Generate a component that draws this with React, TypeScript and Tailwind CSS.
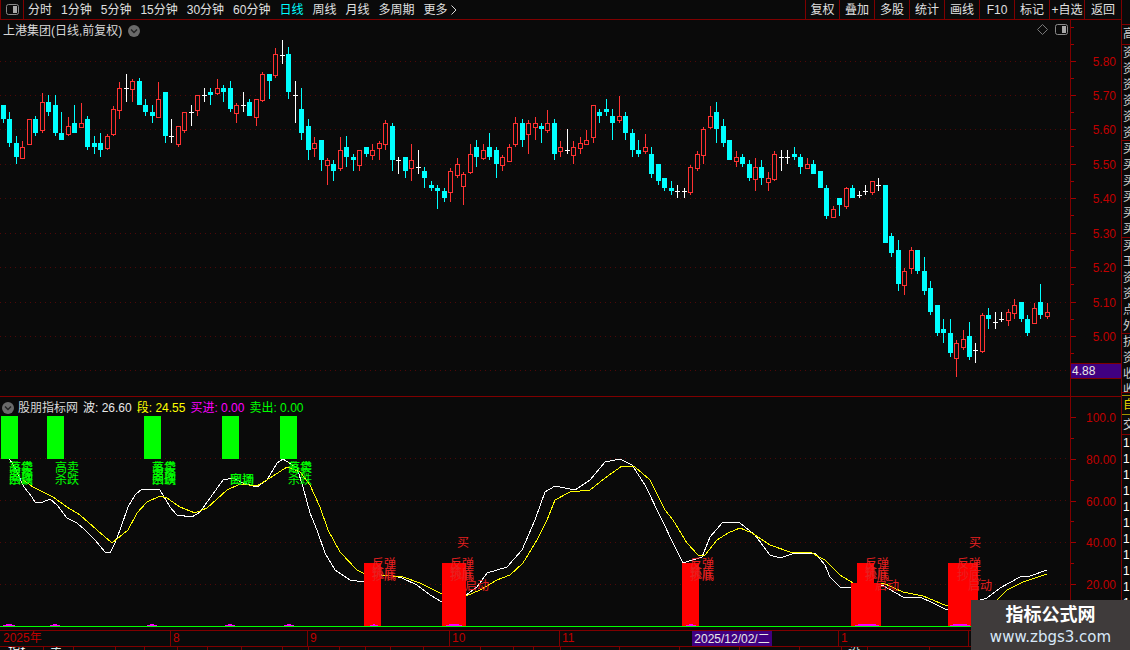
type Candle = [string, number, number, number, number, number];
type Group = { ox: number; oy: number; items: Candle[] };

// candle coords are read off 3x crops, so each group has its own origin
const candleGroups: Group[] = [
  {
    ox: 0,
    oy: 40,
    items: [
      ["c", 10, 195, 249, 195, 237], ["c", 28, 216, 321, 237, 309], ["c", 49, 288, 372, 309, 351], ["r", 67, 303, 354, 321, 354],
      ["r", 88, 237, 312, 237, 312], ["c", 106, 228, 288, 237, 279], ["r", 127, 159, 279, 186, 270], ["c", 145, 165, 228, 186, 216],
      ["c", 166, 165, 288, 195, 279], ["c", 184, 216, 300, 279, 300], ["r", 205, 231, 288, 258, 282], ["c", 223, 195, 279, 249, 279],
      ["r", 244, 189, 261, 249, 261], ["c", 262, 228, 330, 237, 321], ["c", 283, 288, 342, 309, 321], ["c", 301, 279, 351, 309, 330],
      ["r", 322, 282, 330, 288, 324], ["r", 340, 198, 288, 207, 282], ["r", 358, 126, 237, 144, 210], ["w", 379, 102, 186, 145, 145],
      ["r", 397, 117, 186, 123, 147], ["c", 418, 114, 195, 123, 195], ["c", 436, 177, 228, 195, 216], ["c", 457, 195, 249, 216, 228],
      ["r", 475, 126, 231, 177, 231], ["c", 496, 156, 309, 156, 288], ["w", 514, 237, 309, 289, 289], ["r", 535, 258, 321, 258, 312],
      ["r", 553, 216, 279, 216, 270], ["w", 574, 195, 258, 217, 217], ["r", 592, 165, 228, 165, 210], ["w", 613, 144, 186, 166, 166],
      ["c", 631, 144, 195, 156, 165], ["r", 652, 117, 165, 144, 159], ["c", 670, 135, 186, 144, 156], ["c", 691, 123, 216, 144, 207],
      ["r", 709, 189, 249, 195, 219], ["w", 730, 156, 216, 196, 196], ["c", 748, 177, 228, 186, 228], ["r", 769, 177, 258, 177, 231],
      ["r", 787, 96, 186, 102, 180], ["c", 808, 102, 177, 102, 123], ["r", 826, 24, 114, 42, 105], ["w", 847, 0, 72, 44, 44],
      ["c", 865, 21, 177, 42, 156], ["w", 886, 123, 249, 166, 166], ["c", 904, 144, 300, 207, 279], ["c", 925, 237, 360, 258, 330],
      ["r", 943, 291, 351, 309, 324], ["c", 964, 300, 393, 300, 360], ["r", 982, 354, 435, 360, 375], ["c", 1000, 360, 423, 372, 393],
      ["r", 1021, 291, 393, 330, 384], ["c", 1039, 288, 381, 321, 351],
    ],
  },
  {
    ox: 350,
    oy: 80,
    items: [
      ["c", 10, 222, 273, 231, 240], ["r", 28, 210, 273, 210, 255], ["c", 49, 201, 231, 201, 222], ["r", 67, 192, 240, 210, 225],
      ["r", 88, 183, 240, 189, 204], ["r", 106, 120, 210, 129, 192], ["c", 127, 129, 273, 138, 240], ["w", 145, 231, 282, 241, 241],
      ["c", 166, 231, 294, 231, 273], ["r", 184, 192, 303, 240, 264], ["w", 205, 210, 282, 262, 262], ["c", 223, 261, 324, 273, 294],
      ["c", 244, 303, 333, 315, 324], ["c", 262, 315, 387, 324, 333], ["c", 283, 324, 366, 333, 354], ["r", 301, 264, 366, 273, 336],
      ["r", 322, 234, 294, 252, 285], ["r", 340, 276, 375, 282, 318], ["r", 361, 192, 282, 222, 276], ["c", 379, 180, 261, 201, 231],
      ["r", 400, 192, 240, 210, 234], ["c", 418, 159, 240, 201, 231], ["c", 439, 201, 294, 210, 252], ["r", 457, 225, 273, 231, 255],
      ["r", 478, 192, 243, 201, 243], ["r", 496, 111, 201, 129, 192], ["c", 517, 117, 201, 129, 180], ["r", 535, 120, 222, 129, 162],
      ["r", 556, 111, 180, 129, 141], ["c", 574, 129, 189, 138, 147], ["r", 592, 90, 159, 129, 150], ["c", 613, 117, 240, 129, 222],
      ["r", 631, 183, 231, 201, 213], ["w", 652, 147, 222, 211, 211], ["r", 670, 183, 252, 201, 225], ["r", 691, 171, 222, 189, 204],
      ["r", 709, 150, 192, 180, 192], ["r", 730, 75, 189, 75, 171], ["c", 748, 87, 129, 96, 108], ["c", 769, 57, 108, 87, 96],
      ["c", 787, 87, 180, 108, 129], ["r", 808, 48, 129, 108, 120], ["c", 826, 96, 180, 108, 159], ["c", 847, 147, 231, 159, 210],
      ["c", 865, 180, 231, 210, 222], ["r", 886, 162, 222, 201, 213], ["c", 904, 201, 294, 222, 282], ["c", 925, 252, 315, 252, 303],
      ["c", 943, 294, 333, 294, 324], ["c", 964, 303, 345, 324, 333], ["w", 982, 315, 354, 334, 334],
    ],
  },
  {
    ox: 680,
    oy: 90,
    items: [
      ["w", 12, 294, 324, 304, 304], ["r", 31, 225, 315, 231, 305], ["r", 52, 183, 243, 192, 234], ["r", 70, 111, 222, 117, 195],
      ["r", 91, 48, 117, 78, 111], ["c", 109, 36, 159, 66, 117], ["c", 130, 87, 171, 108, 159], ["c", 148, 150, 210, 150, 210],
      ["r", 169, 183, 231, 201, 213], ["c", 187, 192, 231, 201, 222], ["c", 208, 210, 273, 222, 264], ["r", 226, 204, 303, 231, 267],
      ["c", 244, 210, 285, 231, 264], ["r", 265, 246, 303, 264, 276], ["r", 283, 183, 273, 192, 267], ["w", 304, 180, 243, 202, 202],
      ["w", 322, 180, 222, 202, 202], ["c", 343, 171, 210, 192, 201], ["c", 361, 192, 252, 201, 231], ["r", 382, 204, 234, 222, 234],
      ["c", 400, 210, 252, 222, 252], ["c", 421, 243, 294, 243, 294], ["c", 439, 285, 387, 294, 378], ["r", 460, 348, 381, 357, 381],
      ["c", 478, 324, 378, 324, 345], ["r", 499, 291, 357, 294, 348], ["c", 517, 285, 324, 294, 324], ["w", 538, 303, 324, 316, 316],
      ["w", 556, 285, 315, 304, 304], ["r", 577, 273, 315, 273, 306], ["w", 595, 264, 303, 286, 286], ["c", 616, 285, 459, 285, 459],
      ["c", 634, 429, 501, 438, 489], ["c", 655, 450, 603, 480, 582], ["r", 673, 534, 615, 543, 585], ["r", 694, 471, 552, 480, 534],
      ["c", 712, 480, 552, 480, 543], ["c", 733, 501, 615, 543, 603], ["c", 751, 573, 675, 594, 666], ["c", 772, 645, 738, 645, 729],
      ["c", 790, 687, 759, 717, 729], ["c", 811, 687, 801, 729, 789], ["r", 829, 750, 861, 759, 804], ["r", 850, 720, 780, 747, 771],
      ["c", 868, 696, 810, 738, 801], ["w", 886, 759, 819, 781, 781], ["r", 907, 669, 789, 675, 783], ["c", 925, 654, 717, 675, 687],
      ["w", 946, 666, 717, 697, 697], ["w", 964, 666, 696, 688, 688], ["r", 985, 657, 708, 666, 690], ["r", 1003, 627, 687, 645, 669],
      ["c", 1024, 636, 696, 636, 687], ["c", 1042, 675, 738, 687, 729], ["r", 1063, 639, 699, 654, 699], ["c", 1081, 582, 687, 636, 675],
      ["r", 1102, 639, 687, 666, 678],
    ],
  },
];

const whiteLine =
  "9,458 17,472 24,487 32,497 35,502 43,502 50,499 57,505 67,518 77,523 85,530 95,540 105,552 110,553 115,543 120,530 128,507 135,495 142,489 155,489 160,490 170,507 177,515 192,517 200,512 223,480 233,478 243,483 257,487 267,480 277,463 283,459 297,468 303,487 310,513 317,530 325,553 335,570 350,580 363,582 382,575 390,575 402,578 417,585 430,595 442,602 466,595 477,587 487,573 507,567 522,550 535,520 545,492 555,486 575,490 590,480 605,462 620,459 632,465 645,485 662,520 673,543 683,563 702,557 710,537 723,522 733,522 740,523 755,535 770,555 780,558 795,553 815,553 825,565 830,577 840,587 850,588 882,585 903,597 920,597 933,603 947,610 987,598 1000,588 1020,577 1030,576 1047,570";
const yellowLine =
  "23,480 33,487 53,497 67,507 80,515 97,530 112,543 128,530 137,513 147,502 160,496 167,498 180,507 195,513 207,508 227,490 240,484 257,486 270,478 287,467 300,472 310,485 320,507 328,530 340,552 357,570 363,573 382,575 403,577 420,583 440,593 466,596 480,590 497,580 510,575 523,563 537,540 547,520 555,500 570,492 590,490 605,478 622,466 635,467 650,480 665,510 673,520 687,543 698,555 705,555 717,540 728,533 740,528 752,533 770,545 790,552 810,552 825,560 830,565 840,575 853,583 883,583 903,592 923,596 947,606 997,600 1007,590 1023,582 1047,574";

const priceGrid = [61, 95, 129, 164, 198, 233, 267, 302, 336, 370];
const priceLabels: [string, number][] = [
  ["5.80", 61], ["5.70", 95], ["5.60", 129], ["5.50", 164], ["5.40", 198], ["5.30", 233], ["5.20", 267], ["5.10", 302], ["5.00", 336],
];
const indicatorLabels: [string, number][] = [
  ["100.0", 417], ["80.00", 459], ["60.00", 501], ["40.00", 542], ["20.00", 584],
];

const leftMenu = ["分时", "1分钟", "5分钟", "15分钟", "30分钟", "60分钟", "日线", "周线", "月线", "多周期"];
const rightMenu = ["复权", "叠加", "多股", "统计", "画线", "F10", "标记", "+自选", "返回"];

const greenBars = [1, 47, 144, 222, 280];
const redBars: [number, number, number][] = [
  [364, 17, 563], [442, 24, 563], [682, 17, 563], [851, 30, 583], [857, 17, 563], [948, 30, 563],
];
const mounds: [number, number][] = [[3, 12], [50, 10], [147, 10], [225, 10], [284, 10], [370, 8], [446, 16], [686, 10], [855, 24], [950, 20]];

const greenText: [string, number, number][] = [
  ["高卖", 9, 472], ["落袋", 9, 472], ["杀跌", 9, 484], ["回调", 9, 484], ["离场", 9, 480],
  ["高卖", 55, 472], ["杀跌", 55, 484],
  ["高卖", 152, 472], ["落袋", 152, 472], ["杀跌", 152, 484], ["回调", 152, 484], ["离场", 152, 480],
  ["回调", 230, 484], ["离场", 230, 484],
  ["高卖", 288, 472], ["落袋", 288, 472], ["杀跌", 288, 484],
];
const redText: [string, number, number][] = [
  ["反弹", 372, 568], ["抄底", 372, 580], ["筑底", 372, 578],
  ["买", 457, 547], ["反弹", 450, 568], ["抄底", 450, 580], ["筑底", 450, 578], ["启动", 465, 590],
  ["反弹", 690, 568], ["抄底", 690, 580], ["筑底", 690, 578],
  ["反弹", 865, 568], ["抄底", 865, 580], ["筑底", 865, 578], ["启动", 875, 590],
  ["买", 969, 547], ["反弹", 957, 568], ["抄底", 957, 580], ["启动", 968, 590],
];

const timeCells: [string, string][] = [
  ["2025年", "w-[170px]"], ["8", "w-[137px]"], ["9", "w-[142px]"], ["10", "w-[110px]"], ["11", "w-[133px]"],
];
const bottomTicks = [43, 73, 115, 144, 177, 207, 241, 282, 308, 339, 365, 390, 423, 480, 513, 533, 560, 620, 680, 740, 800, 842, 868, 930];
const stripSections = [
  { h: "h-[96px]", rows: ["资", "资", "资", "资", "资", "资"] },
  { h: "h-[97px]", rows: ["买", "买", "买", "买", "买", "买"] },
  { h: "h-[96px]", rows: ["买", "玉", "资", "资", "点", "外"] },
  { h: "h-[59px]", rows: ["抗", "资", "收", "收"] },
];

function ToggleIcon() {
  return (
    <svg width="13" height="11" viewBox="0 0 13 11">
      <rect x="0.5" y="0.5" width="12" height="10" rx="2" fill="none" stroke="#8a8a8a" />
      <rect x="7" y="2" width="4" height="7" fill="#a8a8a8" />
    </svg>
  );
}

function RoundChevron() {
  return (
    <svg width="12" height="12" viewBox="0 0 12 12">
      <circle cx="6" cy="6" r="6" fill="#6a6a6a" />
      <path d="M3 4.5 L6 7.5 L9 4.5" fill="none" stroke="#222" strokeWidth="1.4" />
    </svg>
  );
}

function Candles() {
  return (
    <>
      {candleGroups.flatMap((g, gi) =>
        g.items.map(([type, x, wt, wb, bt, bb], i) => {
          const cx = Math.floor(g.ox + x / 3);
          const y = (v: number) => Math.round(g.oy + v / 3);
          const color = type === "c" ? "#00ffff" : type === "r" ? "#ff3232" : "#ffffff";
          return (
            <g key={`${gi}-${i}`}>
              <rect x={cx} y={y(wt)} width="1" height={y(wb) - y(wt)} fill={color} />
              {type === "c" && <rect x={cx - 2} y={y(bt)} width="5" height={y(bb) - y(bt)} fill={color} />}
              {type === "r" && (
                <rect x={cx - 1.5} y={y(bt) + 0.5} width="4" height={y(bb) - y(bt)} fill="#0a0a0a" stroke={color} />
              )}
              {type === "w" && <rect x={cx - 2} y={y(bt)} width="5" height="1" fill={color} />}
            </g>
          );
        }),
      )}
    </>
  );
}

function GridLines({ ys }: { ys: number[] }) {
  return (
    <>
      {ys.map((y) => (
        <line key={y} x1="0" x2="1070" y1={y + 0.5} y2={y + 0.5} stroke="#500808" strokeDasharray="1 4" />
      ))}
    </>
  );
}

function AxisSvg({ top, height, labels, minors }: { top: number; height: number; labels: [string, number][]; minors: number[] }) {
  return (
    <svg width="50" height={height} viewBox={`1071 ${top} 50 ${height}`} shapeRendering="crispEdges" className="block">
      {labels.map(([text, y]) => (
        <g key={text}>
          <rect x="1071" y={y} width="5" height="1" fill="#a00000" />
          <text x="1116" y={y + 4.5} textAnchor="end" fontSize="12" fill="#c00000" shapeRendering="auto">
            {text}
          </text>
        </g>
      ))}
      {minors.map((y) => (
        <rect key={y} x="1071" y={y} width="3" height="1" fill="#a00000" />
      ))}
    </svg>
  );
}

function PricePane() {
  return (
    <div className="relative flex h-[377px] border-b border-[#7f0000]">
      <svg width="1070" height="376" viewBox="0 20 1070 376" shapeRendering="crispEdges" className="block">
        <GridLines ys={priceGrid} />
        <Candles />
      </svg>
      <div className="relative w-[51px] border-l border-[#7f0000]">
        <AxisSvg top={20} height={376} labels={priceLabels} minors={[27, 44, 78, 112, 146, 181, 215, 250, 284, 319, 353]} />
        <div className="absolute left-0 top-[343px] flex h-[16px] w-[50px] items-center border-y border-[#7f0000] bg-[#400080] pl-px text-[#e8e8e8]">
          4.88
        </div>
      </div>
      <div className="absolute left-[3px] top-[2px] flex items-center gap-[6px] text-[#d8d8d8]">
        <span>上港集团(日线,前复权)</span>
        <RoundChevron />
      </div>
      <div className="absolute left-[1037px] top-[4px] flex items-center gap-[7px]">
        <svg width="11" height="11" viewBox="0 0 11 11">
          <path d="M5.5 0.5 L10.5 5.5 L5.5 10.5 L0.5 5.5 Z" fill="none" stroke="#777" />
        </svg>
        <ToggleIcon />
      </div>
    </div>
  );
}

function IndicatorPane() {
  return (
    <div className="relative flex h-[234px] border-b border-[#7f0000]">
      <svg width="1070" height="233" viewBox="0 397 1070 233" shapeRendering="crispEdges" className="block">
        <GridLines ys={[458, 500, 542, 584]} />
        <polyline points={whiteLine} fill="none" stroke="#ffffff" />
        <polyline points={yellowLine} fill="none" stroke="#ffff00" />
        {greenBars.map((x) => (
          <rect key={x} x={x} y="416" width="17" height="43" fill="#00ff00" />
        ))}
        {redBars.map(([x, w, y]) => (
          <rect key={`${x}-${y}`} x={x} y={y} width={w} height={626 - y} fill="#ff0000" />
        ))}
        <g fontSize="12" shapeRendering="auto">
          {greenText.map(([text, x, y], i) => (
            <text key={i} x={x} y={y} fill="#00ff00">
              {text}
            </text>
          ))}
          {redText.map(([text, x, y], i) => (
            <text key={i} x={x} y={y} fill="#e82020">
              {text}
            </text>
          ))}
        </g>
        {mounds.map(([x, w]) => (
          <g key={x}>
            <rect x={x} y="625" width={w} height="1" fill="#ff00ff" />
            <rect x={x + 3} y="624" width={w - 6} height="1" fill="#ff00ff" />
          </g>
        ))}
        <rect x="0" y="626" width="1070" height="1" fill="#00ff00" />
      </svg>
      <div className="w-[51px] border-l border-[#7f0000]">
        <AxisSvg top={397} height={233} labels={indicatorLabels} minors={[438, 480, 521, 563, 605]} />
      </div>
      <div className="absolute left-[2px] top-[2px] flex items-center gap-[5px] whitespace-pre">
        <RoundChevron />
        <span className="-ml-[1px] text-[#d8d8d8]">股朋指标网</span>
        <span className="text-[#e8e8e8]">波: 26.60</span>
        <span className="text-[#ffff00]">段: 24.55</span>
        <span className="text-[#ff00ff]">买进: 0.00</span>
        <span className="text-[#00ff00]">卖出: 0.00</span>
      </div>
    </div>
  );
}

function TimeAxis() {
  return (
    <>
      <div className="flex h-[16px] border-b border-[#7f0000] text-[#c00000]">
        {timeCells.map(([text, width], i) => (
          <div key={text} className={`${width} h-full leading-[15px] ${i > 0 ? "border-l border-[#7f0000] pl-[2px]" : "pl-[3px]"}`}>
            {text}
          </div>
        ))}
        <div className="flex h-full w-[80px] items-center justify-center bg-[#400080] text-[#e8e8e8]">2025/12/02/二</div>
        <div className="h-full w-[66px]" />
        <div className="h-full w-[130px] border-l border-[#7f0000] pl-[2px] leading-[15px]">1</div>
        <div className="h-full flex-1 border-l border-[#7f0000] pl-[2px] leading-[15px]">1</div>
      </div>
      <div className="relative h-[3px] overflow-hidden">
        <div className="flex h-full leading-[11px]">
          <div className="h-full w-[43px] pl-[8px] text-white">指标</div>
          {bottomTicks.map((x, i) => (
            <div key={x} className="h-full border-l border-[#7f0000] pl-[6px] text-[#d0e8e8]" style={{ width: (bottomTicks[i + 1] ?? 1122) - x }}>
              {x === 842 ? "设置" : x === 43 ? "主" : ""}
            </div>
          ))}
        </div>
      </div>
    </>
  );
}

function RightStrip() {
  return (
    <div className="w-[8px] overflow-hidden text-[#d0d0d0]">
      <div className="h-[25px] border-b border-[#7f0000]" />
      <div className="h-[20px] overflow-hidden border-b border-[#7f0000] pl-px leading-[18px]">高</div>
      {stripSections.map((section, i) => (
        <div key={i} className={`${section.h} overflow-hidden border-b border-[#7f0000] pl-px`}>
          {section.rows.map((row, j) => (
            <div key={j} className="h-[16px] leading-[16px]">
              {row}
            </div>
          ))}
        </div>
      ))}
      <div className="mt-[2px] h-[20px] overflow-hidden border-y border-[#a09000] pl-px leading-[18px] text-[#e8d800]">自</div>
      <div className="h-[20px] overflow-hidden border-b border-[#7f0000] pl-px leading-[20px]">交</div>
      {[0, 1, 2, 3, 4, 5, 6, 7, 8, 9, 10].map((n) => (
        <div key={n} className="h-[16px] pl-px leading-[16px] text-white">
          1
        </div>
      ))}
    </div>
  );
}

export default function App() {
  return (
    <div className="relative flex h-[650px] w-[1130px] overflow-hidden bg-[#0a0a0a] font-['Liberation_Sans','Noto_Sans_CJK_SC',sans-serif] text-[12px]">
      <div className="flex w-[1122px] flex-col border-r border-[#7f0000]">
        <div className="flex h-[20px] border-b border-[#7f0000] text-[#e0e0e0]">
          <div className="flex h-full w-[24px] items-center justify-center border-x border-[#7f0000]">
            <ToggleIcon />
          </div>
          <div className="flex w-[781px] items-center gap-[9px] pl-[4px]">
            {leftMenu.map((item) => (
              <span key={item} className={item === "日线" ? "text-[#00ffff]" : ""}>
                {item}
              </span>
            ))}
            <span className="flex items-center gap-[3px]">
              更多
              <svg width="6" height="10" viewBox="0 0 6 10">
                <path d="M0.5 0.5 L5 5 L0.5 9.5" fill="none" stroke="#d8d8d8" />
              </svg>
            </span>
          </div>
          {rightMenu.map((item, i) => (
            <div
              key={item}
              className={`flex h-full items-center justify-center border-l border-[#7f0000] ${
                i === 0 ? "w-[34px]" : i === 8 ? "w-[37px]" : "w-[35px]"
              }`}
            >
              {item}
            </div>
          ))}
        </div>
        <PricePane />
        <IndicatorPane />
        <TimeAxis />
      </div>
      <RightStrip />
      <div className="absolute left-[971px] top-[600px] flex h-[50px] w-[159px] flex-col items-center bg-[#3f3b3b]">
        <span className="mt-[2px] text-[18px] font-bold leading-[26px] text-white">指标公式网</span>
        <span className="font-['DejaVu_Sans',sans-serif] text-[15px] leading-[19px] text-[#d8e8f8]">www.zbgs3.com</span>
      </div>
    </div>
  );
}
